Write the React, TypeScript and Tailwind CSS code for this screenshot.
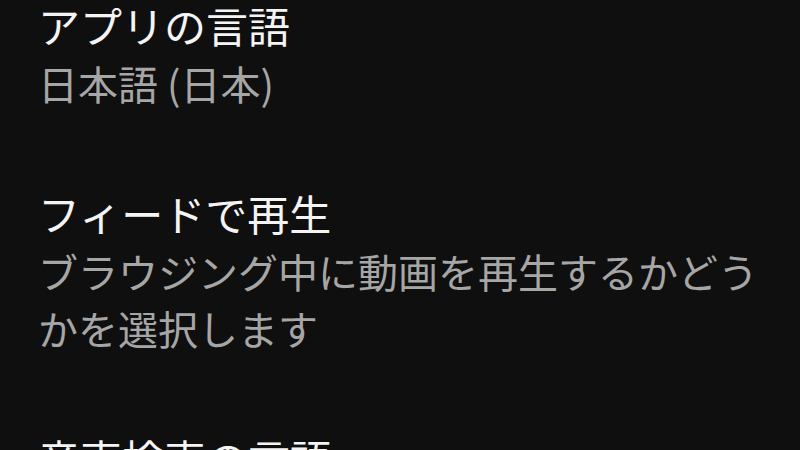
export default function App() {
  const items = [
    { title: "アプリの言語", sub: "日本語 (日本)" },
    { title: "フィードで再生", sub: "ブラウジング中に動画を再生するかどうかを選択します" },
    { title: "音声検索の言語", sub: "日本語 (日本)" },
  ];
  return (
    <div
      className="w-[800px] h-[450px] overflow-hidden bg-[#0f0f0f]"
      style={{ fontFamily: '"Noto Sans CJK JP", "Noto Sans", sans-serif' }}
    >
      <div className="flex flex-col gap-[71px] pl-[38px] pr-[40px] -mt-[5px]">
        {items.map((it) => (
          <div key={it.title} className="flex flex-col">
            <div className="text-[42px] leading-[60px] text-[#f4f4f4]">{it.title}</div>
            <div className="text-[40px] leading-[57px] text-[#a6a6a6]">{it.sub}</div>
          </div>
        ))}
      </div>
    </div>
  );
}
